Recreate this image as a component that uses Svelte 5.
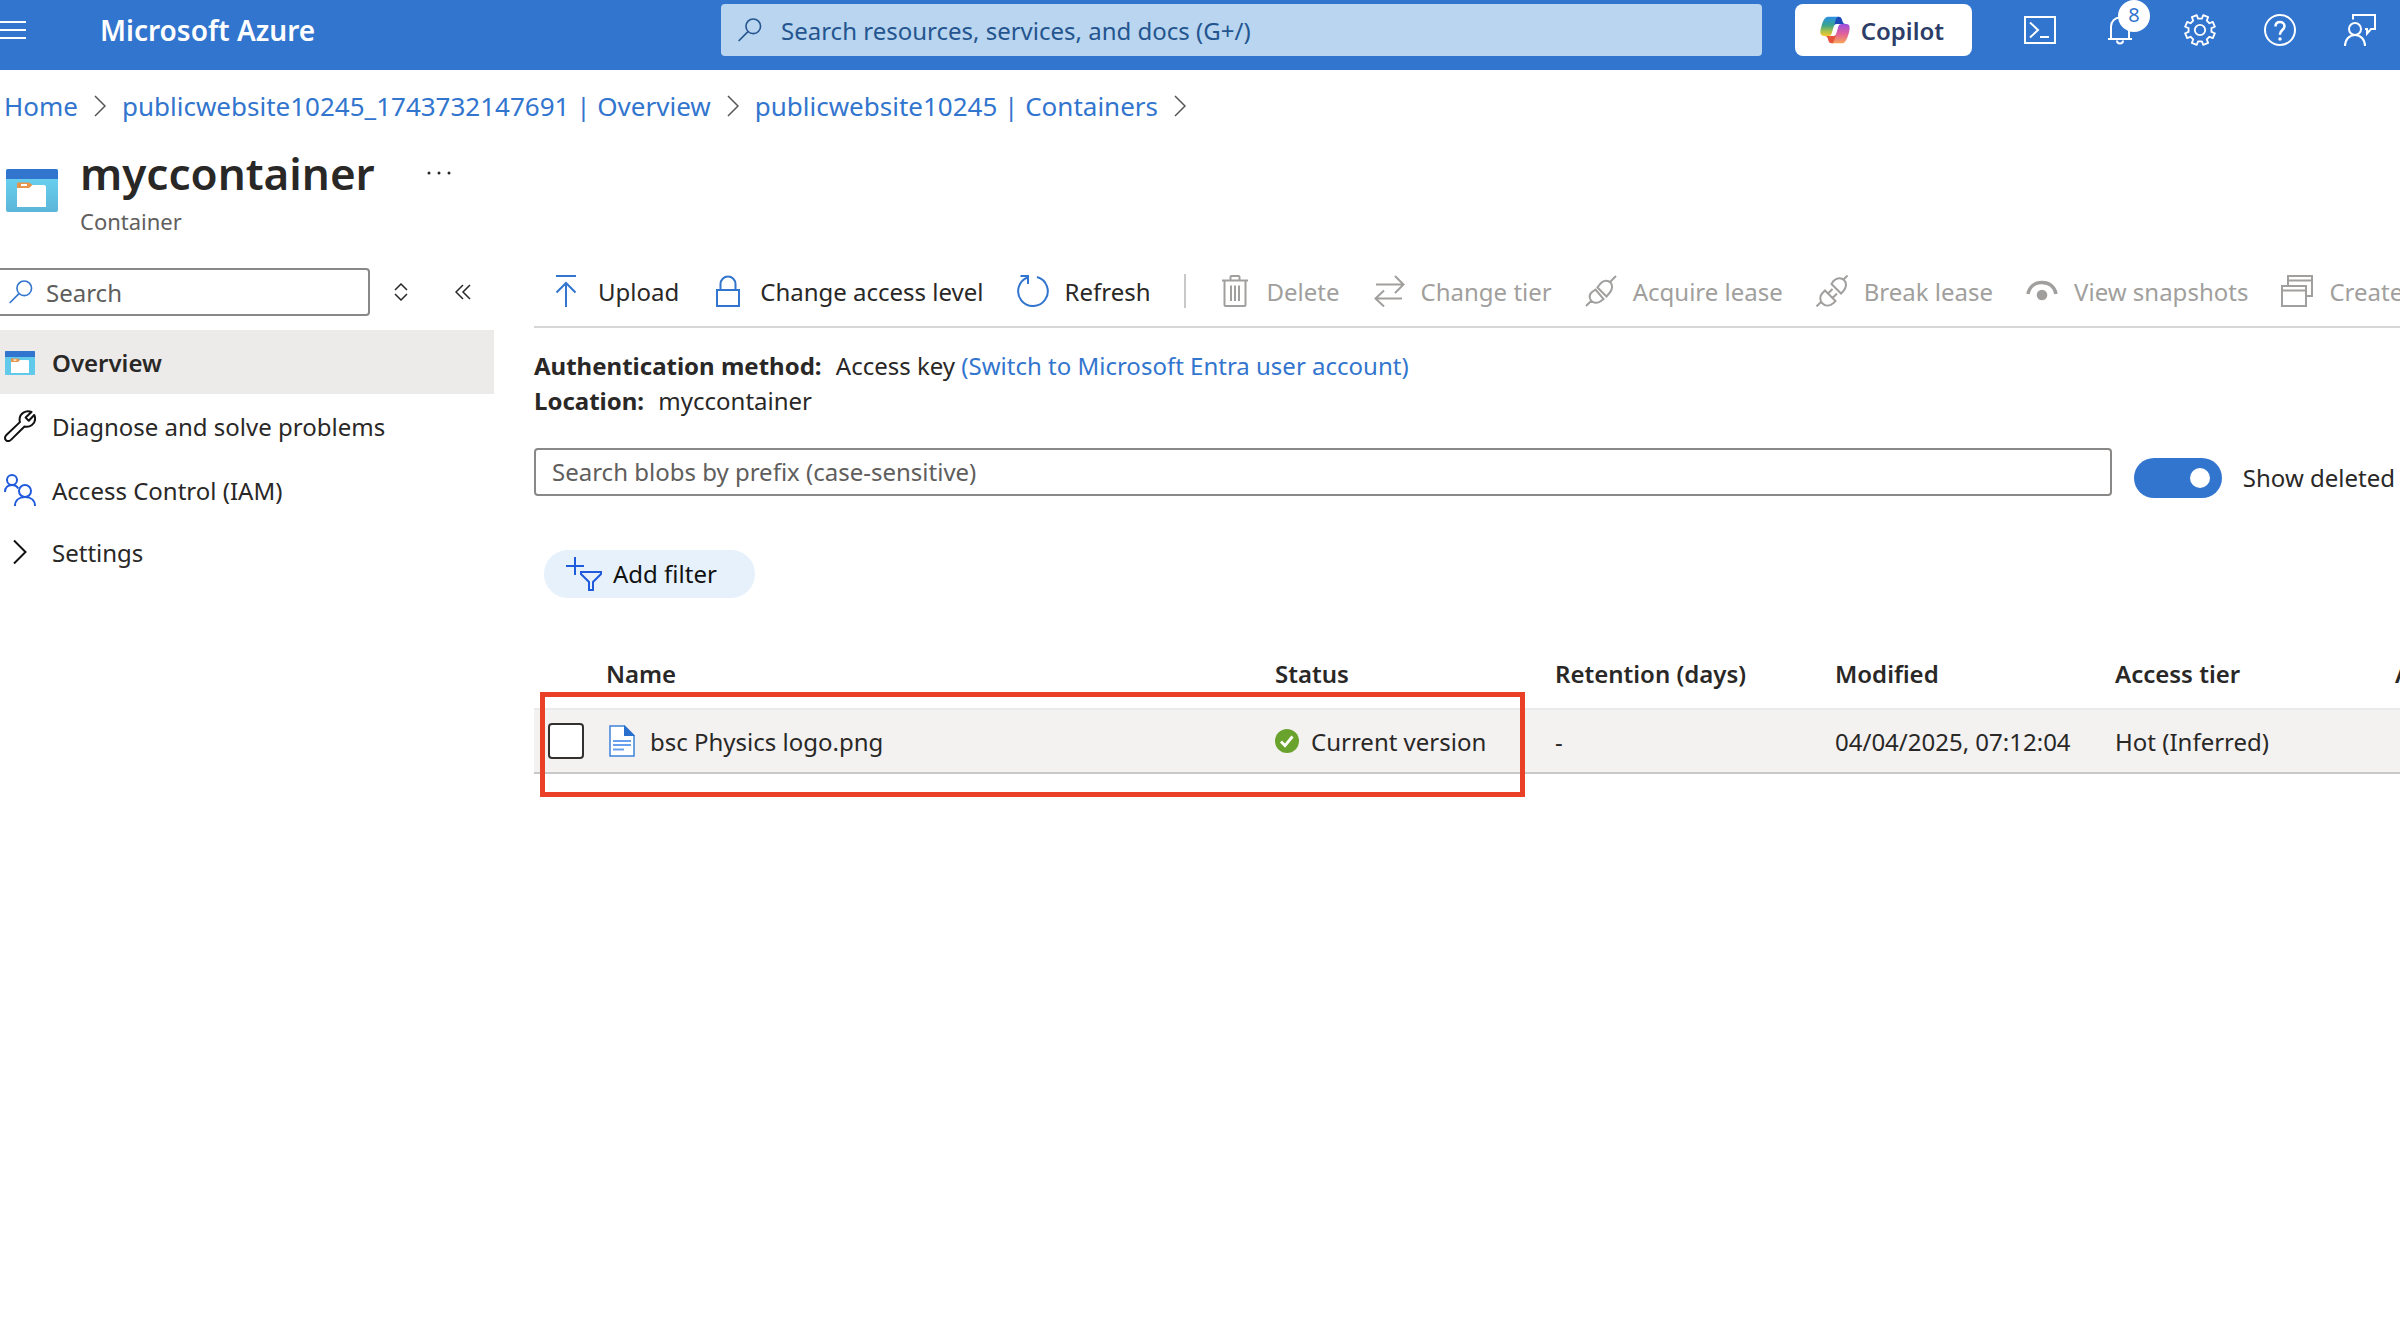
<script>
  const crumbs = [
    'Home',
    'publicwebsite10245_1743732147691 | Overview',
    'publicwebsite10245 | Containers'
  ];

  const headerActions = [
    { icon: 'shell', label: 'Cloud Shell' },
    { icon: 'bell', label: 'Notifications', badge: 8 },
    { icon: 'gear', label: 'Settings' },
    { icon: 'help', label: 'Help' },
    { icon: 'feedback', label: 'Feedback' }
  ];

  const menu = [
    { icon: 'container', label: 'Overview', active: true },
    { icon: 'wrench', label: 'Diagnose and solve problems' },
    { icon: 'people', label: 'Access Control (IAM)' },
    { icon: 'chevron', label: 'Settings', group: true }
  ];

  const primaryTools = [
    { icon: 'upload', label: 'Upload' },
    { icon: 'lock', label: 'Change access level' },
    { icon: 'refresh', label: 'Refresh' }
  ];

  const blobTools = [
    { icon: 'trash', label: 'Delete' },
    { icon: 'swap', label: 'Change tier' },
    { icon: 'plug', label: 'Acquire lease' },
    { icon: 'unplug', label: 'Break lease' },
    { icon: 'eye', label: 'View snapshots' },
    { icon: 'windows', label: 'Create' }
  ];

  const blobs = [
    {
      name: 'bsc Physics logo.png',
      status: 'Current version',
      retention: '-',
      modified: '04/04/2025, 07:12:04',
      tier: 'Hot (Inferred)'
    }
  ];

  let showDeleted = $state(true);

  // Outline of an eight-toothed cog centred in a 32-unit box.
  function cog() {
    const at = (deg, r) => {
      const a = (deg * Math.PI) / 180;
      return `${(16 + r * Math.cos(a)).toFixed(2)} ${(16 + r * Math.sin(a)).toFixed(2)}`;
    };
    const points = [];
    for (let i = 0; i < 8; i++) {
      const mid = 22.5 + i * 45;
      points.push(at(mid - 13, 11.6), at(mid - 10, 15.2), at(mid + 10, 15.2), at(mid + 13, 11.6));
    }
    return `M${points.join('L')}Z`;
  }
</script>

{#snippet icon(name)}
  <svg class="icon" viewBox="0 0 32 32" fill="none" stroke="currentColor" stroke-width="2" aria-hidden="true">
    {#if name === 'shell'}
      <rect x="1" y="3" width="30" height="26" />
      <path d="M6 8.500l8 7.500-8 7.500M16 23h9" />
    {:else if name === 'bell'}
      <path d="M4 25h24M7 25V12.500a9 9 0 0 1 18 0V25M13 26.500a3 3 0 0 0 6 0" />
    {:else if name === 'gear'}
      <path d={cog()} stroke-width="1.800" stroke-linejoin="round" />
      <circle cx="16" cy="16" r="5.200" stroke-width="1.800" />
    {:else if name === 'help'}
      <circle cx="16" cy="16" r="15" />
      <path d="M11.500 12.500c0-3 2-4.500 4.500-4.500s4.500 1.600 4.500 4.200c0 3.600-4.500 4-4.500 7.800v.8" stroke-width="2.500" />
      <circle cx="16" cy="25" r="1.700" fill="currentColor" stroke="none" />
    {:else if name === 'feedback'}
      <path d="M9 5.500V1h22v14h-4l-4 4.500V15h-2" />
      <circle cx="11" cy="15" r="6" />
      <path d="M1 32c0-6 4-11 10-11s10 5 10 11" />
    {:else if name === 'search'}
      <circle cx="20" cy="11.500" r="9" stroke-width="2" />
      <path d="M13.500 18L2 29.500" stroke-width="2" />
    {:else if name === 'container'}
      <rect x="1" y="5" width="30" height="24" rx="1" fill="#61c9ea" stroke="none" />
      <path d="M1 11V6a1 1 0 0 1 1-1h28a1 1 0 0 1 1 1v5z" fill="#3275ce" stroke="none" />
      <path d="M7 14h17a1 1 0 0 1 1 1v12H7z" fill="#fff" stroke="none" />
      <path d="M7 12.500h7l2 1.500-2 2H7z" fill="#e8954a" stroke="none" />
      <path d="M9.500 13.500h3v1.200h-3z" fill="#fff" stroke="none" />
    {:else if name === 'wrench'}
      <path
        d="M27.500 2C22 -.5 15.500 3.500 15.600 9.500c0 1 .1 1.800.3 2.600L2.400 25c-1.900 1.800-1.700 4.200-.4 5.200 1.300 1.100 3.600 1 5.200-.6L20.500 16.500c5.500 1.200 10.800-2.500 10.600-8.200 0-1.200-.4-2.300-.9-3.300l-5.400 5.800-3.200-3.200z"
        stroke="#111" stroke-linejoin="round" />
    {:else if name === 'people'}
      <g stroke="#1f5bdc">
        <circle cx="8" cy="6" r="5" />
        <circle cx="21" cy="17" r="6" />
        <path d="M1 18c0-4.500 3-7 7-7 2.800 0 5 1.200 6.200 3.500M11 32c0-5.500 4-9 10-9s10 3.500 10 9" />
      </g>
    {:else if name === 'chevron'}
      <path d="M10 4.500L21.500 16 10 27.500" stroke="#111" />
    {:else if name === 'upload'}
      <path d="M6 1h20M16 32V8M6.500 17.500L16 8l9.500 9.500" />
    {:else if name === 'lock'}
      <path d="M5 15h22v16H5zM8.500 15V9a7.500 7.500 0 0 1 15 0v6" />
    {:else if name === 'refresh'}
      <path d="M20 2A14.800 14.800 0 1 1 11 2.300M3.500 1H11v8" />
    {:else if name === 'trash'}
      <path d="M3 5.500h26M5.500 5.500V30a1 1 0 0 0 1 1h19a1 1 0 0 0 1-1V5.500M11.500 5V2a1 1 0 0 1 1-1h7a1 1 0 0 1 1 1v3M12 10.500v15.500M16 10.500v15.500M20 10.500v15.500" />
    {:else if name === 'swap'}
      <path d="M3 9.500h27M22 1l8.500 8.500L22 18M29 23.500H2.500M11 15.500l-8.500 8L11 31.500" />
    {:else if name === 'plug'}
      <path d="M1 31l6-6M31 1l-5.500 5.500M10.500 14.500l8 9.500-2.500 2c-3.500 2.800-8 2.200-10-.5-2-3-1.500-6 .5-8zM12.500 12.500l9 9 3-3.500c3-3.500 3.500-8 1-10.500s-6.500-2.500-9.500.5z" />
    {:else if name === 'unplug'}
      <path d="M.500 31.500l4.500-4.500M31.500.500L28 4M9 15.500L19.500 26l-2 2c-3.500 3-8 3.500-11 .5s-3-7.500 0-10.500zM12 18.500l4.500-4.500M16.500 23l4.500-4.500M15.500 9L25 18.500l2-2c3.500-3.500 4-8.500 1-11.500s-7.500-2-10.500 1z" />
    {:else if name === 'eye'}
      <path d="M2 19C3.500 11.500 9 7.500 16 7.500s12.500 4 14 11.500" stroke-width="3.500" />
      <circle cx="16" cy="20" r="5.300" fill="currentColor" stroke="none" />
    {:else if name === 'windows'}
      <path d="M1 11h24v20H1zM1 15.500h24M7 10.500V1h24v20h-5.500M7 5.500h24" />
    {/if}
  </svg>
{/snippet}

<header class="topbar">
  <div class="brand">
    <button class="burger" aria-label="Portal menu">
      <svg viewBox="0 0 26 18" stroke="currentColor" stroke-width="2" aria-hidden="true">
        <path d="M0 1h26M0 9h26M0 17h26" />
      </svg>
    </button>
    <a href="#home">Microsoft Azure</a>
  </div>
  <label class="global-search">
    {@render icon('search')}
    <input type="text" aria-label="Search the portal" placeholder="Search resources, services, and docs (G+/)" />
  </label>
  <button class="copilot">
    <svg viewBox="0 0 48 48" aria-hidden="true">
      <defs>
        <linearGradient id="cpA" x1="0" y1="0" x2="0" y2="1">
          <stop offset="0" stop-color="#2a8fe8" /><stop offset=".45" stop-color="#3aa58c" />
          <stop offset=".75" stop-color="#a8c04a" /><stop offset="1" stop-color="#f5c82e" />
        </linearGradient>
        <linearGradient id="cpB" x1="0" y1="0" x2="0" y2="1">
          <stop offset="0" stop-color="#9b4fe0" /><stop offset=".5" stop-color="#e2609a" />
          <stop offset="1" stop-color="#f7a457" />
        </linearGradient>
      </defs>
      <path fill="#1d49b8" d="M34.142 7.325A4.630 4.630 0 0 0 29.700 4H28.350a4.630 4.630 0 0 0-4.554 3.794L21.480 20.410l.575-1.965a4.630 4.630 0 0 1 4.444-3.329h7.853l3.294 1.282 3.175-1.282h-.926a4.630 4.630 0 0 1-4.443-3.325z" />
      <path fill="#e5543a" d="M14.330 40.656A4.630 4.630 0 0 0 18.779 44h2.870a4.630 4.630 0 0 0 4.629-4.510l.312-12.163-.654 2.233a4.630 4.630 0 0 1-4.443 3.329h-7.919l-2.824-1.531-3.057 1.531h.911a4.630 4.630 0 0 1 4.447 3.344z" />
      <path fill="url(#cpA)" d="M29.500 4H13.460c-4.583 0-7.332 6.057-9.166 12.113-2.172 7.176-5.015 16.773 3.208 16.773h6.926a4.630 4.630 0 0 0 4.455-3.358l4.814-16.505c.815-2.756 1.493-5.123 2.534-6.597C26.816 5.600 27.788 4 29.500 4z" />
      <path fill="url(#cpB)" d="M18.498 44h16.040c4.583 0 7.332-6.058 9.166-12.115 2.172-7.177 5.015-16.775-3.208-16.775h-6.926a4.630 4.630 0 0 0-4.455 3.359l-4.814 16.508c-.815 2.757-1.493 5.124-2.534 6.598-.584.826-1.556 2.425-3.269 2.425z" />
    </svg>
    Copilot
  </button>
  <nav class="actions" aria-label="Portal actions">
    {#each headerActions as action}
      <button aria-label={action.label}>
        {@render icon(action.icon)}
        {#if action.badge}<span class="badge">{action.badge}</span>{/if}
      </button>
    {/each}
  </nav>
</header>

<nav class="crumbs" aria-label="Breadcrumb">
  {#each crumbs as crumb}
    <a href="#crumb">{crumb}</a>
    <svg viewBox="0 0 12 22" fill="none" stroke="#555" stroke-width="1.500" aria-hidden="true">
      <path d="M1 1l10 10L1 21" />
    </svg>
  {/each}
</nav>

<section class="title">
  <svg class="resource" viewBox="0 0 52 43" aria-hidden="true">
    <defs>
      <linearGradient id="body" x1="0" y1="0" x2="0" y2="1">
        <stop offset="0" stop-color="#6cd6f5" /><stop offset="1" stop-color="#5bb6d8" />
      </linearGradient>
    </defs>
    <rect width="52" height="43" rx="2" fill="url(#body)" />
    <path d="M0 10V2a2 2 0 0 1 2-2h48a2 2 0 0 1 2 2v8z" fill="#3275ce" />
    <path d="M11 16h27a2 2 0 0 1 2 2v20H11z" fill="#fff" />
    <path d="M12 13.500h11l3.500 2.500-3.500 3H11v-4.500a1 1 0 0 1 1-1z" fill="#e8954a" />
    <path d="M15 15h6v2h-6z" fill="#fff" />
  </svg>
  <div>
    <div class="heading">
      <h1>myccontainer</h1>
      <button class="more" aria-label="More actions">
        <svg viewBox="0 0 24 4" fill="currentColor" aria-hidden="true">
          <circle cx="2" cy="2" r="1.500" /><circle cx="12" cy="2" r="1.500" /><circle cx="22" cy="2" r="1.500" />
        </svg>
      </button>
    </div>
    <p>Container</p>
  </div>
</section>

<div class="layout">
  <aside>
    <div class="menu-search">
      <label>
        {@render icon('search')}
        <input type="text" aria-label="Search menu" placeholder="Search" />
      </label>
      <button aria-label="Expand all">
        <svg width="14" height="18" viewBox="0 0 14 18" fill="none" stroke="currentColor" stroke-width="1.500" aria-hidden="true">
          <path d="M1 7l6-6 6 6M1 11l6 6 6-6" />
        </svg>
      </button>
      <button aria-label="Collapse menu">
        <svg width="16" height="16" viewBox="0 0 16 16" fill="none" stroke="currentColor" stroke-width="1.500" aria-hidden="true">
          <path d="M8 1L1 8l7 7M15 1L8 8l7 7" />
        </svg>
      </button>
    </div>
    <ul>
      {#each menu as item}
        <li>
          <a href="#menu" class:active={item.active} class:group={item.group}>
            {@render icon(item.icon)}{item.label}
          </a>
        </li>
      {/each}
    </ul>
  </aside>

  <main>
    <div class="toolbar" role="toolbar" aria-label="Container commands">
      {#each primaryTools as tool}
        <button>{@render icon(tool.icon)}{tool.label}</button>
      {/each}
      <span class="divider"></span>
      {#each blobTools as tool}
        <button disabled>{@render icon(tool.icon)}{tool.label}</button>
      {/each}
    </div>

    <div class="facts">
      <p><strong>Authentication method:</strong> Access key <a href="#switch">(Switch to Microsoft Entra user account)</a></p>
      <p><strong>Location:</strong> myccontainer</p>
    </div>

    <div class="find">
      <input class="prefix" type="text" aria-label="Blob prefix" placeholder="Search blobs by prefix (case-sensitive)" />
      <label class="toggle">
        <input type="checkbox" role="switch" bind:checked={showDeleted} />
        Show deleted
      </label>
    </div>

    <button class="filter">
      <svg viewBox="0 0 36 34" fill="none" stroke="#1f5bdc" stroke-width="2" aria-hidden="true">
        <path d="M0 9h18M9 0v18M15 15h20v2l-8 8v8h-4v-8l-8-8z" />
      </svg>
      Add filter
    </button>

    <div class="blobs">
      <table>
        <colgroup>
          <col class="pick" /><col /><col class="mid" /><col class="mid" /><col class="mid" /><col class="mid" /><col class="mid" />
        </colgroup>
        <thead>
          <tr>
            <th></th>
            <th>Name</th>
            <th>Status</th>
            <th>Retention (days)</th>
            <th>Modified</th>
            <th>Access tier</th>
            <th>A</th>
          </tr>
        </thead>
        <tbody>
          {#each blobs as blob}
            <tr>
              <td class="pick-cell"><input type="checkbox" aria-label="Select {blob.name}" /></td>
              <td>
                <span class="file">
                  <svg viewBox="0 0 26 32" aria-hidden="true">
                    <path d="M1 1h14.500L25 10.500V31H1z" fill="#fff" stroke="#3f82dc" stroke-width="1.500" />
                    <path d="M15 0l11 11H15z" fill="#2b6fce" />
                    <path d="M4 16h18M4 20h18M4 24.500h11" stroke="#6a9fee" stroke-width="2" />
                  </svg>
                  {blob.name}
                </span>
              </td>
              <td>
                <span class="status">
                  <svg viewBox="0 0 24 24" aria-hidden="true">
                    <circle cx="12" cy="12" r="12" fill="#69a32d" />
                    <path d="M6 12.500l4 4.200L17.500 7.500" fill="none" stroke="#fff" stroke-width="2.800" />
                  </svg>
                  {blob.status}
                </span>
              </td>
              <td>{blob.retention}</td>
              <td>{blob.modified}</td>
              <td>{blob.tier}</td>
              <td></td>
            </tr>
          {/each}
        </tbody>
      </table>
      <div class="highlight"></div>
    </div>
  </main>
</div>

<style>
  :global(body) {
    margin: 0;
    background: #fff;
    color: #292827;
    font-family: 'Noto Sans', 'Open Sans', sans-serif;
    font-size: 24px;
    overflow-x: hidden;
  }

  button,
  input {
    font: inherit;
    color: inherit;
    background: none;
    border: 0;
    padding: 0;
    margin: 0;
  }

  a {
    color: #3275ce;
    text-decoration: none;
  }

  p,
  h1,
  ul {
    margin: 0;
    padding: 0;
  }

  svg {
    display: block;
    flex: none;
  }

  .icon {
    width: 32px;
    height: 32px;
  }

  .topbar {
    display: flex;
    align-items: center;
    padding: 4px 0 14px;
    background: #3275ce;
    color: #fff;
  }

  .brand {
    display: flex;
    align-items: center;
    flex: 0 0 721px;
    gap: 74px;
  }

  .brand a {
    color: #fff;
    font-size: 28px;
    line-height: 52px;
    font-weight: 600;
  }

  .burger svg {
    width: 26px;
    height: 18px;
  }

  .global-search {
    display: flex;
    align-items: center;
    flex: 1;
    gap: 18px;
    height: 52px;
    box-sizing: border-box;
    padding: 0 16px;
    border-radius: 4px;
    background: #b9d5f0;
    color: #24558f;
  }

  .global-search .icon,
  .menu-search .icon {
    width: 26px;
    height: 26px;
  }

  input {
    min-width: 0;
    outline: none;
  }

  .global-search input,
  .menu-search input {
    flex: 1;
  }

  .global-search input::placeholder {
    color: #24558f;
    opacity: 1;
  }

  .copilot {
    display: flex;
    align-items: center;
    gap: 10px;
    height: 52px;
    margin: 0 28px 0 33px;
    padding: 0 28px 0 24px;
    border-radius: 8px;
    background: #fff;
    color: #2c3d68;
    font-weight: 600;
  }

  .copilot svg {
    width: 32px;
    height: 32px;
  }

  .actions {
    display: flex;
  }

  .actions button {
    position: relative;
    display: grid;
    place-items: center;
    width: 80px;
    height: 52px;
  }

  .badge {
    position: absolute;
    top: -4px;
    left: 38px;
    width: 32px;
    height: 32px;
    border-radius: 50%;
    background: #fff;
    color: #3275ce;
    font-size: 20px;
    line-height: 30px;
    text-align: center;
  }

  .crumbs {
    display: flex;
    align-items: center;
    gap: 16px;
    height: 72px;
    padding-left: 4px;
    font-size: 26px;
  }

  .crumbs svg {
    width: 12px;
    height: 22px;
  }

  .title {
    display: flex;
    align-items: center;
    gap: 22px;
    padding-left: 6px;
  }

  .resource {
    width: 52px;
    height: 43px;
  }

  .heading {
    display: flex;
    align-items: center;
    gap: 52px;
  }

  h1 {
    font-size: 44px;
    line-height: 62px;
    font-weight: 600;
  }

  .more svg {
    width: 24px;
    height: 4px;
  }

  .title p {
    color: #605e5c;
    font-size: 22px;
    line-height: 34px;
  }

  .layout {
    display: flex;
    align-items: flex-start;
    gap: 40px;
    padding-top: 18px;
  }

  aside {
    flex: 0 0 494px;
    min-width: 0;
    padding-top: 12px;
  }

  .menu-search {
    display: flex;
    align-items: center;
    height: 48px;
    margin-bottom: 14px;
  }

  .menu-search label {
    display: flex;
    align-items: center;
    flex: 0 0 370px;
    gap: 12px;
    height: 48px;
    box-sizing: border-box;
    padding-left: 8px;
    border: 2px solid #8a8886;
    border-left: 0;
    border-radius: 0 4px 4px 0;
    color: #3275ce;
  }

  .menu-search input {
    width: 100%;
    color: #292827;
  }

  .menu-search button {
    display: grid;
    place-items: center;
    width: 62px;
    height: 48px;
  }

  ::placeholder {
    color: #605e5c;
    opacity: 1;
  }

  ul {
    list-style: none;
  }

  aside li a {
    display: flex;
    align-items: center;
    gap: 16px;
    height: 64px;
    padding-left: 4px;
    color: #292827;
  }

  aside li .active {
    background: #edebe9;
    font-weight: 600;
  }

  aside li .group {
    height: 60px;
  }

  main {
    flex: 1;
    min-width: 0;
  }

  .toolbar {
    display: flex;
    align-items: center;
    gap: 33px;
    height: 72px;
    box-sizing: border-box;
    padding-left: 16px;
    border-bottom: 2px solid #d6d6d6;
    overflow: hidden;
    white-space: nowrap;
  }

  .toolbar button {
    display: flex;
    align-items: center;
    flex: none;
    gap: 16px;
  }

  .toolbar .icon {
    color: #3275ce;
  }

  .toolbar button:disabled,
  .toolbar button:disabled .icon {
    color: #a19f9d;
  }

  .divider {
    flex: none;
    width: 2px;
    height: 34px;
    background: #c8c8c8;
  }

  .facts {
    padding: 20px 0 30px;
    line-height: 35px;
  }

  .facts strong {
    margin-right: 8px;
  }

  .find {
    display: flex;
    align-items: flex-start;
    gap: 22px;
    padding-right: 5px;
    margin-bottom: 52px;
  }

  .prefix {
    flex: 1;
    height: 48px;
    box-sizing: border-box;
    padding: 0 16px 2px;
    border: 2px solid #8a8886;
    border-radius: 4px;
  }

  .toggle {
    display: flex;
    align-items: center;
    gap: 21px;
    height: 40px;
    margin-top: 10px;
    line-height: 40px;
    white-space: nowrap;
  }

  .toggle input {
    appearance: none;
    display: flex;
    align-items: center;
    width: 88px;
    height: 40px;
    box-sizing: border-box;
    padding: 0 12px;
    border-radius: 20px;
    background: #8a8886;
  }

  .toggle input::before {
    content: '';
    width: 20px;
    height: 20px;
    border-radius: 50%;
    background: #fff;
  }

  .toggle input:checked {
    justify-content: flex-end;
    background: #3275ce;
  }

  .filter {
    display: flex;
    align-items: center;
    gap: 11px;
    height: 48px;
    margin: 0 0 40px 10px;
    padding: 0 38px 0 22px;
    border-radius: 24px;
    background: #e6f1fb;
    color: #111;
    line-height: 48px;
  }

  .filter svg {
    width: 36px;
    height: 34px;
  }

  .blobs {
    position: relative;
    overflow: hidden;
    padding-bottom: 40px;
  }

  table {
    width: calc(100% + 275px);
    table-layout: fixed;
    border-collapse: separate;
    border-spacing: 0;
    text-align: left;
  }

  .pick {
    width: 72px;
  }

  .mid {
    width: 280px;
  }

  th,
  td {
    box-sizing: border-box;
    padding: 0;
    white-space: nowrap;
  }

  th {
    height: 70px;
    font-weight: 600;
  }

  td {
    height: 66px;
    border-top: 2px solid #eaeaea;
    border-bottom: 2px solid #c8c8c8;
    background: #f3f2f1;
  }

  .pick-cell {
    padding-left: 14px;
  }

  .pick-cell input {
    appearance: none;
    display: block;
    width: 36px;
    height: 36px;
    box-sizing: border-box;
    border: 2px solid #323130;
    border-radius: 4px;
    background: #fff;
  }

  .file,
  .status {
    display: flex;
    align-items: center;
  }

  .file {
    gap: 15px;
    padding-left: 3px;
  }

  .file svg {
    width: 26px;
    height: 32px;
  }

  .status {
    gap: 12px;
  }

  .status svg {
    width: 24px;
    height: 24px;
  }

  .highlight {
    position: absolute;
    top: 54px;
    left: 6px;
    right: 875px;
    height: 105px;
    box-sizing: border-box;
    border: 5px solid #ea4025;
    pointer-events: none;
  }
</style>
